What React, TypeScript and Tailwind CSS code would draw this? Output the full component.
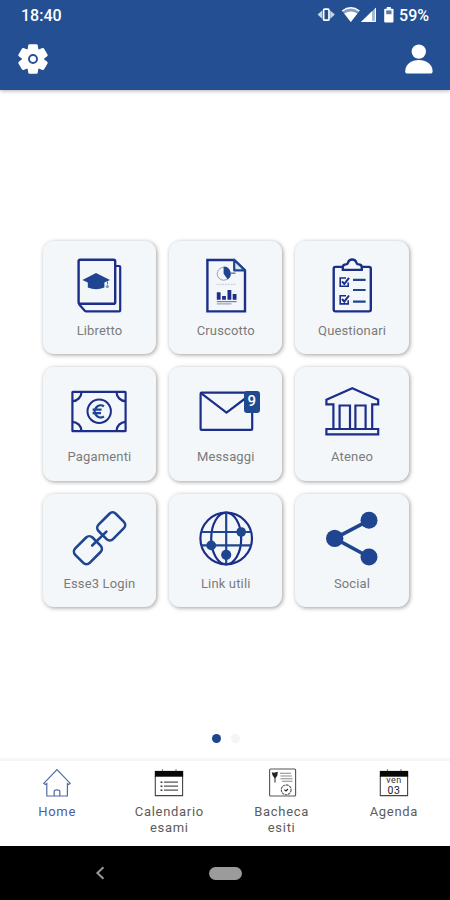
// src/App.tsx
import type { ReactNode } from 'react';
import clsx from 'clsx';

const NAVY = '#1f4590';
const INK = '#1b2f8a';

// --- Iconos de las tarjetas (caja de 56x56) ---
function TileIcon({ children }: { children: ReactNode }) {
  return (
    <svg
      viewBox="0 0 56 56"
      className="block h-14 w-14 overflow-visible"
      fill="none"
      stroke={INK}
      strokeWidth="2.2"
      strokeLinejoin="round"
    >
      {children}
    </svg>
  );
}

function LibrettoIcon() {
  return (
    <TileIcon>
      <path d="M45 8h3.2q1 0 1 1v43.4q0 1-1 1H15.2q-.8 0-1.4-.7L7.8 46" />
      <rect x="7.6" y="1.8" width="36.6" height="44" rx="1.6" strokeWidth="2.4" />
      <path d="M25 15 39 22 33.4 24.6V29.5Q25 33 16.8 29.5V24.6L11.4 22Z" fill={NAVY} stroke="none" />
      <path d="M36.5 23.5v3" stroke={NAVY} strokeWidth="0.8" />
      <circle cx="36.3" cy="28.6" r="1.6" fill="#8597c0" stroke="none" />
    </TileIcon>
  );
}

function CruscottoIcon() {
  return (
    <TileIcon>
      <path d="M9.4 2H36.2L47 12.6V53.4H9.4Z" strokeWidth="2.4" strokeLinejoin="miter" />
      <path d="M36.2 2V12.4H47Z" fill="#dfe6f2" stroke={NAVY} />
      <circle cx="25.6" cy="15.8" r="6.4" stroke="#93a1c4" strokeWidth="1" />
      <path d="M25.6 15.8V8.6A7.2 7.2 0 0 1 29.8 21.6Z" fill={NAVY} stroke="none" />
      <path d="M33 15.2h4.5" stroke="#6f84b8" strokeWidth="1.6" />
      <path d="M18.5 26.3H38" stroke="#b9c0d0" strokeWidth="0.8" strokeDasharray="2 .8" />
      <path d="M20.7 41.7V34.3M26 41.7V38M31.4 41.7V32M36.6 41.7V36" strokeWidth="3.8" />
      <path d="M18.8 43.7H38.6" stroke="#56688f" strokeWidth="1" />
      <path d="M18.8 45.9H33.5" stroke="#8994ab" strokeWidth="1" />
    </TileIcon>
  );
}

function QuestionariIcon() {
  return (
    <TileIcon>
      <path
        d="M18 8.9H11.5Q9.7 8.9 9.7 10.7V51.6Q9.7 53.4 11.5 53.4H45Q46.8 53.4 46.8 51.6V10.7Q46.8 8.9 45 8.9H38.4"
        strokeWidth="2.4"
      />
      <path
        d="M18.8 11.9V9.3Q18.8 6.4 22 6.4 23.5 6.4 24 4.6 25 1.5 28.2 1.5 31.4 1.5 32.4 4.6 33 6.4 34.5 6.4 37.8 6.4 37.8 9.3V11.9Z"
        strokeWidth="2.4"
      />
      {[0, 17.7].map((dy) => (
        <g key={dy} transform={`translate(0 ${dy})`} strokeLinejoin="miter">
          <path d="M22 20H16.2V28.2H24.2V24.5" strokeWidth="1.6" />
          <path d="M18 23.3 20.3 26 25 19.8" strokeWidth="2" />
        </g>
      ))}
      <path d="M29 21.8H41.6M29 32H41.6M29 43.6H41.6" stroke={NAVY} strokeWidth="2.2" />
    </TileIcon>
  );
}

function PagamentiIcon() {
  return (
    <TileIcon>
      <rect x="1.4" y="7.8" width="53.2" height="39.4" rx="0.5" />
      <path d="M10.5 8A9.3 9.3 0 0 1 1.6 17.2M45.5 8A9.3 9.3 0 0 0 54.4 17.2M10.5 47A9.3 9.3 0 0 0 1.6 37.8M45.5 47A9.3 9.3 0 0 1 54.4 37.8" />
      <circle cx="28.2" cy="27.3" r="11.7" strokeWidth="2" />
      <path d="M33 22.2A6.1 6.1 0 1 0 33 32.6M21.6 25.6H30.6M21.6 29.2H30" stroke={NAVY} strokeWidth="2.3" />
    </TileIcon>
  );
}

function MessaggiIcon() {
  return (
    <div className="relative">
      <TileIcon>
        <rect x="2.6" y="8.7" width="51.6" height="37.2" rx="1" />
        <path d="M3 9.2 28.5 28.6 48.5 13.5" />
      </TileIcon>
      <span className="absolute left-[46px] top-[7px] flex h-[22px] w-4 items-center justify-center rounded-[3px] bg-[#1f4a8f] pb-0.5 text-[15px] font-medium leading-none text-white">
        9
      </span>
    </div>
  );
}

function AteneoIcon() {
  return (
    <TileIcon>
      <path
        d="M28.3 4.2 54.2 15.8V20.3H48.2V45H54.2V50.4H2.4V45H9.4V20.3H2.4V15.8Z"
        strokeLinejoin="miter"
      />
      <path d="M9.4 45H48.2" />
      <path d="M15.6 21.5H26V45H15.6ZM31.4 21.5H41.6V45H31.4Z" strokeLinejoin="miter" />
    </TileIcon>
  );
}

function LoginIcon() {
  return (
    <TileIcon>
      <g stroke={NAVY} strokeWidth="2.6">
        <rect x="28" y="5.2" width="24.4" height="20.4" rx="4.5" transform="rotate(-45 40.2 15.4)" />
        <rect x="4.7" y="29" width="24.4" height="20.4" rx="4.5" transform="rotate(-45 16.9 39.2)" />
        <path d="M21.2 34.5 35.4 20.6" strokeLinecap="round" />
      </g>
    </TileIcon>
  );
}

function LinkUtiliIcon() {
  return (
    <TileIcon>
      <circle cx="28.2" cy="27.5" r="25.8" />
      <ellipse cx="28.2" cy="27.5" rx="15" ry="25.8" />
      <path d="M28.2 1.5V53.5M3 21H53.4M3 34.4H53.4" stroke={NAVY} />
      <g fill={NAVY} stroke="none">
        <circle cx="43.2" cy="21" r="4.8" />
        <circle cx="13.2" cy="34.4" r="4.9" />
        <circle cx="28.2" cy="43.8" r="5.1" />
      </g>
    </TileIcon>
  );
}

function SocialIcon() {
  return (
    <TileIcon>
      <path d="M45 9.3 10.7 27.4 45 46" stroke={NAVY} strokeWidth="3.6" />
      <g fill={NAVY} stroke="none">
        <circle cx="10.7" cy="27.4" r="8.7" />
        <circle cx="45" cy="9.3" r="8.5" />
        <circle cx="45" cy="46" r="8.5" />
      </g>
    </TileIcon>
  );
}

// --- Iconos de la barra inferior ---
function HomeIcon() {
  return (
    <svg viewBox="0 0 30 30" className="h-[30px] w-[30px]" fill="none" stroke="#5368a8" strokeWidth="1.2">
      <path d="M15 1.6 28.2 15.4 26.6 16.6 25.4 15.6V28H4.8V15.6L3.4 16.6 1.8 15.4Z" />
      <path d="M12.2 28V23.3Q12.2 21.8 15 21.8 17.8 21.8 17.8 23.3V28" />
    </svg>
  );
}

function CalendarBase({ children }: { children: ReactNode }) {
  return (
    <svg viewBox="0 0 30 30" className="h-[30px] w-[30px]" fill="none" stroke="#444" strokeWidth="1.1">
      <path d="M8.5 1V4M22 1V4" stroke="#888" />
      <path d="M1.3 8V27.6H28.6V8" />
      <rect x="0.8" y="2.9" width="28.4" height="5.8" fill="#080808" stroke="none" />
      {children}
    </svg>
  );
}

function EsamiIcon() {
  return (
    <CalendarBase>
      <path d="M6.6 14.2h1.8M6.6 18.2h1.8M6.6 22.2h1.8" stroke="#333" strokeWidth="1.4" />
      <path d="M10 14.2H24M10 18.2H24M10 22.2H24" stroke="#555" strokeWidth="1.3" />
    </CalendarBase>
  );
}

function AgendaIcon() {
  return (
    <CalendarBase>
      <text x="15" y="15.2" textAnchor="middle" className="text-[9px]" letterSpacing=".5" fill="#333" stroke="none">
        ven
      </text>
      <text x="15" y="25.8" textAnchor="middle" className="text-[10.5px]" fill="#222" stroke="none">
        03
      </text>
    </CalendarBase>
  );
}

function EsitiIcon() {
  return (
    <svg viewBox="0 0 30 30" className="h-[30px] w-[30px]" fill="none" stroke="#555" strokeWidth="1.1">
      <rect x="2.6" y="1" width="26" height="27" rx="1" />
      <path d="M4.8 4.2 7 4.8 10.8 3.7 10.4 7.5 8.5 10H7.4L5.5 7.3Z" fill="#222" stroke="none" />
      <path d="M8 9V14.4" stroke="#333" />
      <path d="M13 5.3H24M13.5 8H24.8M13.5 10.8H25.5M15 13.3H25.5" stroke="#888" />
      <circle cx="19.2" cy="21.8" r="4.9" strokeDasharray="2.6 .6" />
      <path d="M17.4 21.6 19 23 21 21" stroke="#222" />
    </svg>
  );
}

const tiles = [
  { label: 'Libretto', icon: <LibrettoIcon /> },
  { label: 'Cruscotto', icon: <CruscottoIcon /> },
  { label: 'Questionari', icon: <QuestionariIcon /> },
  { label: 'Pagamenti', icon: <PagamentiIcon /> },
  { label: 'Messaggi', icon: <MessaggiIcon /> },
  { label: 'Ateneo', icon: <AteneoIcon /> },
  { label: 'Esse3 Login', icon: <LoginIcon /> },
  { label: 'Link utili', icon: <LinkUtiliIcon /> },
  { label: 'Social', icon: <SocialIcon /> },
];

const tabs = [
  { label: 'Home', icon: <HomeIcon />, active: true },
  { label: 'Calendario esami', icon: <EsamiIcon /> },
  { label: 'Bacheca esiti', icon: <EsitiIcon /> },
  { label: 'Agenda', icon: <AgendaIcon /> },
];

function StatusBar() {
  return (
    <div className="flex h-[30px] items-center justify-between pl-[21px] pr-[21px] text-[16px] font-medium text-white">
      <span className="pt-0.5">18:40</span>
      <div className="flex items-center">
        <svg viewBox="0 0 78 18" className="mr-1 h-[18px] w-[78px]" fill="#fff">
          {/* vibración */}
          <path d="M5.2 4.5V12.7L0.8 8.8V8.2ZM13.2 4.5V12.7L17.6 8.8V8.2Z" opacity=".75" />
          <rect x="6.6" y="3.2" width="5.4" height="11" rx="1" fill="none" stroke="#fff" strokeWidth="1.7" />
          {/* wifi */}
          <path d="M33.8 16 25.2 5Q33.8-1.4 42.4 5Z" opacity=".45" />
          <path d="M25.2 5Q33.8-1.4 42.4 5" fill="none" stroke="#fff" strokeWidth="1.5" />
          <path d="M33.8 16 27.2 7.6Q33.8 3.6 40.4 7.6Z" />
          {/* señal */}
          <path d="M44 16 59 1.4V16Z" opacity=".6" />
          <path d="M44 16 55 5.2V16Z" />
          <path d="M58.4 2.2V15.4H45" fill="none" stroke="#fff" strokeWidth="1" />
          {/* batería */}
          <path d="M69.8 1h4v1.7h1.7q1 0 1 1V15.5q0 1-1 1H68.2q-1 0-1-1V3.7q0-1 1-1h1.6Z" />
          <rect x="69.2" y="4.4" width="5.3" height="3.8" fill="#244f92" opacity=".75" />
        </svg>
        <span className="pt-0.5">59%</span>
      </div>
    </div>
  );
}

function Header() {
  return (
    <header className="h-[90px] bg-[#244f92] shadow-[0_1px_4px_rgba(0,0,0,0.3)]">
      <StatusBar />
      <div className="flex h-[58px] items-center justify-between pl-[17px] pr-4">
        <svg viewBox="0 0 32 32" className="h-8 w-8" fill="#fff">
          <circle cx="16" cy="16" r="11" />
          {[0, 60, 120, 180, 240, 300].map((deg) => (
            <path
              key={deg}
              d="M10.4 8 11.2 2.4Q11.4 1.2 12.6 1.2H19.4Q20.6 1.2 20.8 2.4L21.6 8Z"
              transform={`rotate(${deg} 16 16)`}
            />
          ))}
          <circle cx="16" cy="16" r="4" stroke="#244f92" strokeWidth="1.9" />
        </svg>
        <svg viewBox="0 0 30 32" className="h-8 w-[30px]" fill="#fff">
          <circle cx="14.8" cy="8.6" r="7.2" />
          <path d="M1.2 28.4C1.2 21.2 7.3 17 14.8 17S28.6 21.2 28.6 28.4Q28.6 30.4 27 30.4H2.8Q1.2 30.4 1.2 28.4Z" />
        </svg>
      </div>
    </header>
  );
}

export default function App() {
  return (
    <div className="flex h-[900px] w-[450px] flex-col overflow-hidden bg-white font-['Roboto',sans-serif]">
      <Header />

      <main className="flex flex-1 flex-col items-center pl-[1.5px] pt-[151px]">
        <div className="grid grid-cols-3 gap-[13px]">
          {tiles.map((tile) => (
            <button
              key={tile.label}
              type="button"
              className="flex h-[113.3px] w-[113.3px] flex-col items-center rounded-[11px] bg-[#f4f7fa] pt-[17px] shadow-[1px_1px_4px_rgba(0,0,0,0.38)]"
            >
              {tile.icon}
              <span className="mt-[9px] text-[13px] leading-4 tracking-[0.15px] text-[#7b7b7b]">{tile.label}</span>
            </button>
          ))}
        </div>

        {/* Paginación */}
        <div className="mt-auto flex gap-[9.5px] pb-[15px]">
          <span className="h-[9px] w-[9px] rounded-full bg-[#1d4690]" />
          <span className="h-[9px] w-[9px] rounded-full bg-[#f5f5f5]" />
        </div>
      </main>

      <nav className="grid h-[88px] grid-cols-4 border-t-[3px] border-[#f6f6f6] pl-px pt-[7px]">
        {tabs.map((tab) => (
          <button
            key={tab.label}
            type="button"
            className={clsx(
              'flex flex-col items-center text-[13px] leading-4 tracking-[0.7px]',
              tab.active ? 'text-[#4d5d9c]' : 'text-[#5c5c5c]'
            )}
          >
            {tab.icon}
            <span className="mt-1.5 w-20 text-center">{tab.label}</span>
          </button>
        ))}
      </nav>

      <div className="grid h-[54px] grid-cols-[200px_50px_200px] items-center bg-black">
        <svg viewBox="0 0 10 14" className="ml-[95px] h-3.5 w-2.5" fill="none" stroke="#999" strokeWidth="2">
          <path d="M8.4 1.2 2.4 7 8.4 12.8" />
        </svg>
        <span className="h-[13px] w-[33px] justify-self-center rounded-full bg-[#9b9b9b]" />
      </div>
    </div>
  );
}
